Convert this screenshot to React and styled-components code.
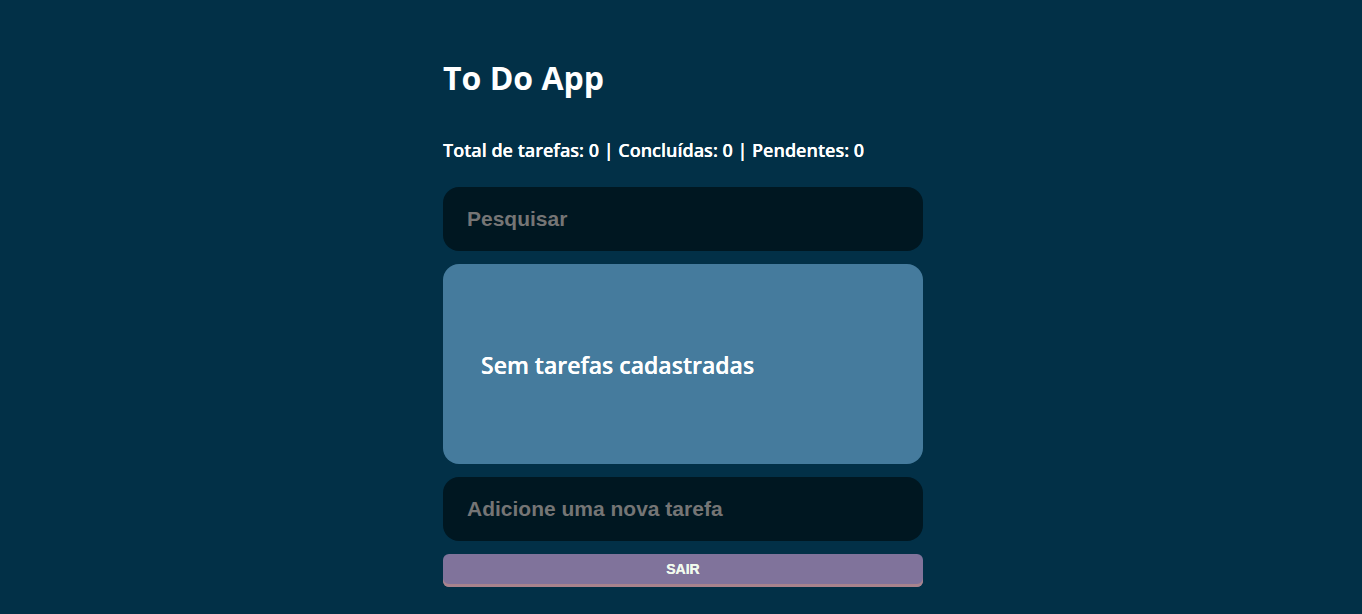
import React, { useState } from "react";
import styled, { createGlobalStyle } from "styled-components";

const GlobalStyle = createGlobalStyle`
  *, *::before, *::after { box-sizing: border-box; }
  body {
    margin: 0;
    background: #023047;
    color: #fff;
    font-family: "Segoe UI", "Open Sans", "Noto Sans", sans-serif;
  }
`;

const Page = styled.main`
  width: 100%;
  max-width: 484px;
  margin: 0 auto;
  padding: 56px 0 24px 4px;
`;

const Title = styled.h1`
  margin: 0 0 38px;
  font-size: 32px;
  line-height: 44px;
  font-weight: 700;
`;

const Summary = styled.h2`
  margin: 0 0 25px;
  font-size: 18px;
  line-height: 24px;
  font-weight: 600;
  text-shadow: 0 0 0 #fff;
`;

const Stack = styled.div`
  display: flex;
  flex-direction: column;
  gap: 13px;
`;

const Field = styled.input`
  width: 100%;
  height: 64px;
  padding: 0 24px;
  border: 0;
  border-radius: 16px;
  outline: none;
  background: #001721;
  color: #fff;
  font: 700 21px "Liberation Sans", Arial, sans-serif;
  &::placeholder { color: #757575; opacity: 1; }
`;

const TaskPanel = styled.section`
  min-height: 200px;
  padding: 0 38px;
  border-radius: 16px;
  background: #457b9d;
  display: flex;
  align-items: center;
`;

const EmptyMessage = styled.h3`
  margin: 0;
  padding-top: 2px;
  font-size: 23px;
  line-height: 32px;
  font-weight: 600;
  text-shadow: 0 0 0 #fff;
`;

const LogoutButton = styled.button`
  height: 33px;
  padding: 0 0 3px;
  border: 0;
  border-radius: 6px;
  background: #80739b;
  box-shadow: inset 0 -3px 0 #a8838d;
  color: #f1faee;
  font: 700 14px/30px "Liberation Sans", Arial, sans-serif;
  text-shadow: 0 0 0 #f1faee;
  cursor: pointer;
`;

export default function App() {
  const [search, setSearch] = useState("");
  const [task, setTask] = useState("");
  return (
    <>
      <GlobalStyle />
      <Page>
        <Title>To Do App</Title>
        <Summary>Total de tarefas: 0 | Concluídas: 0 | Pendentes: 0</Summary>
        <Stack>
          <Field aria-label="Pesquisar" placeholder="Pesquisar" value={search} onChange={(e) => setSearch(e.target.value)} />
          <TaskPanel>
            <EmptyMessage>Sem tarefas cadastradas</EmptyMessage>
          </TaskPanel>
          <Field aria-label="Adicione uma nova tarefa" placeholder="Adicione uma nova tarefa" value={task} onChange={(e) => setTask(e.target.value)} />
          <LogoutButton type="button">SAIR</LogoutButton>
        </Stack>
      </Page>
    </>
  );
}
